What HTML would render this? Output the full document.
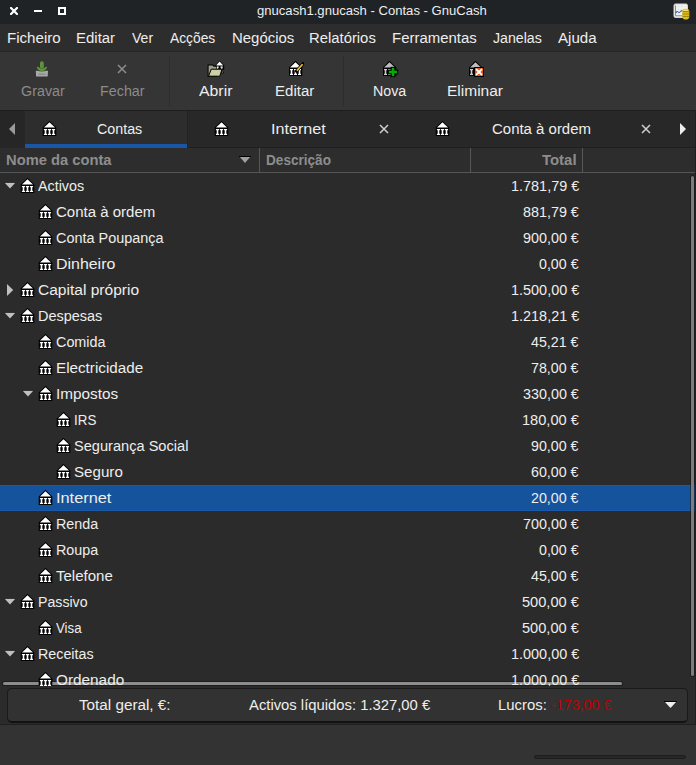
<!DOCTYPE html>
<html><head><meta charset="utf-8"><style>
html,body{margin:0;padding:0;width:696px;height:765px;overflow:hidden;background:#2b2b2b}
.t{position:absolute;white-space:pre;line-height:20px;font-family:"Liberation Sans", sans-serif}
svg{display:block}
</style></head><body>
<div style="position:absolute;left:0px;top:0px;width:696px;height:24px;background:#202326;"></div><svg style="position:absolute;left:10px;top:7px;" width="8" height="8" viewBox="0 0 8 8"><path d="M1 1 L7 7 M7 1 L1 7" stroke="#fff" stroke-width="2.2" stroke-linecap="square"/></svg><div style="position:absolute;left:34px;top:10px;width:8px;height:2px;background:#fff;"></div><svg style="position:absolute;left:58px;top:7px;" width="8" height="8" viewBox="0 0 8 8"><rect x="1" y="1" width="6" height="6" fill="none" stroke="#fff" stroke-width="2"/></svg><div class="t" style="left:256.80px;top:1.38px;font-size:13.33px;color:#eeeeec;font-weight:normal;transform:scaleX(0.9816);transform-origin:0 0;">gnucash1.gnucash - Contas - GnuCash</div><svg style="position:absolute;left:673px;top:3px;" width="17" height="17" viewBox="0 0 17 17"><rect x="1" y="1" width="13.5" height="13.5" rx="1.5" fill="#f2f2f0" stroke="#d6d6d6" stroke-width="1"/><path d="M2.5 3.5 H13.5 M2.5 6.5 H13.5 M5.5 2 V13 M9 2 V13" stroke="#e2e2e2" stroke-width="0.6"/><path d="M2.5 2.5 V12.8 H13" stroke="#8a8a8a" stroke-width="1" fill="none"/><path d="M3 10 Q4 7.5 5.2 9 Q6.3 10.2 7.5 8.5 Q8.4 7.3 9.5 8.2" stroke="#3a67ae" stroke-width="1.1" fill="none"/><rect x="9.3" y="5.8" width="7" height="10.6" rx="2.8" fill="#dcbc1e"/><path d="M9.5 8.6 H16.1 M9.5 11 H16.1 M9.5 13.5 H16.1" stroke="#9c8200" stroke-width="0.9"/><rect x="10.5" y="6.5" width="4.6" height="1.4" rx="0.7" fill="#f4e070"/></svg><div style="position:absolute;left:0px;top:24px;width:696px;height:27px;background:#2d2d2d;"></div><div style="position:absolute;left:0px;top:51px;width:696px;height:1px;background:#262626;"></div><div class="t" style="left:6.77px;top:27.92px;font-size:14.67px;color:#eeeeec;font-weight:normal;transform:scaleX(1.0294);transform-origin:0 0;">Ficheiro</div><div class="t" style="left:75.68px;top:27.92px;font-size:14.67px;color:#eeeeec;font-weight:normal;transform:scaleX(1.0211);transform-origin:0 0;">Editar</div><div class="t" style="left:131.90px;top:27.92px;font-size:14.67px;color:#eeeeec;font-weight:normal;transform:scaleX(0.9591);transform-origin:0 0;">Ver</div><div class="t" style="left:170.30px;top:27.92px;font-size:14.67px;color:#eeeeec;font-weight:normal;transform:scaleX(0.9417);transform-origin:0 0;">Acções</div><div class="t" style="left:231.78px;top:27.92px;font-size:14.67px;color:#eeeeec;font-weight:normal;transform:scaleX(1.0200);transform-origin:0 0;">Negócios</div><div class="t" style="left:309.09px;top:27.92px;font-size:14.67px;color:#eeeeec;font-weight:normal;transform:scaleX(1.0123);transform-origin:0 0;">Relatórios</div><div class="t" style="left:392.28px;top:27.92px;font-size:14.67px;color:#eeeeec;font-weight:normal;transform:scaleX(1.0207);transform-origin:0 0;">Ferramentas</div><div class="t" style="left:493.10px;top:27.92px;font-size:14.67px;color:#eeeeec;font-weight:normal;transform:scaleX(0.9660);transform-origin:0 0;">Janelas</div><div class="t" style="left:557.50px;top:27.92px;font-size:14.67px;color:#eeeeec;font-weight:normal;transform:scaleX(1.0289);transform-origin:0 0;">Ajuda</div><div style="position:absolute;left:0px;top:52px;width:696px;height:58px;background:#353535;"></div><div style="position:absolute;left:169px;top:56px;width:1px;height:50px;background:#2d2d2d;"></div><div style="position:absolute;left:343px;top:56px;width:1px;height:50px;background:#2d2d2d;"></div><div style="position:absolute;left:0px;top:110px;width:696px;height:1px;background:#1e1e1e;"></div><div class="t" style="left:20.50px;top:80.92px;font-size:14.67px;color:#8b8b8b;font-weight:normal;transform:scaleX(0.9778);transform-origin:0 0;">Gravar</div><div class="t" style="left:99.52px;top:80.92px;font-size:14.67px;color:#8b8b8b;font-weight:normal;transform:scaleX(0.9778);transform-origin:0 0;">Fechar</div><div class="t" style="left:199.00px;top:80.92px;font-size:14.67px;color:#eeeeec;font-weight:normal;transform:scaleX(1.0806);transform-origin:0 0;">Abrir</div><div class="t" style="left:275.47px;top:80.92px;font-size:14.67px;color:#eeeeec;font-weight:normal;transform:scaleX(1.0263);transform-origin:0 0;">Editar</div><div class="t" style="left:372.53px;top:80.92px;font-size:14.67px;color:#eeeeec;font-weight:normal;transform:scaleX(0.9706);transform-origin:0 0;">Nova</div><div class="t" style="left:447.44px;top:80.92px;font-size:14.67px;color:#eeeeec;font-weight:normal;transform:scaleX(1.0577);transform-origin:0 0;">Eliminar</div><svg style="position:absolute;left:35px;top:61px;" width="14" height="16" viewBox="0 0 14 16"><rect x="5" y="0.2" width="3.8" height="7.5" rx="1.9" fill="#5a9638"/><path d="M1.8 6.4 Q1.8 5.3 3.1 5.9 L6.9 8.1 L10.7 5.9 Q12 5.3 12 6.4 Q11.2 9.2 6.9 10.4 Q2.6 9.2 1.8 6.4 Z" fill="#5a9638"/><path d="M0.8 9.8 H2.5 Q6.9 11.4 11.3 9.8 H13 L12.7 15.6 H1.1 Z" fill="#a9a9a9"/><rect x="3.2" y="12.6" width="7.4" height="1.3" fill="#8a8a8a"/></svg><svg style="position:absolute;left:117px;top:64px;" width="10" height="10" viewBox="0 0 10 10"><path d="M1 1 L9 9 M9 1 L1 9" stroke="#8d8d8d" stroke-width="1.5"/></svg><svg style="position:absolute;left:207px;top:60px;" width="18" height="18" viewBox="0 0 18 18"><path d="M12.6 0.4 L17.2 5.6 L17.2 9.8 L8.2 9.8 L8.2 5.6 Z" fill="#000"/><path d="M12.6 1.6 L16.3 5.4 L9 5.4 Z" fill="#fff"/><rect x="9.2" y="6.6" width="2.8" height="0.9" fill="#ddd"/><rect x="9.9" y="6.6" width="1.4" height="2.6" fill="#ddd"/><rect x="13.2" y="6.6" width="2.8" height="0.9" fill="#ddd"/><rect x="13.9" y="6.6" width="1.4" height="2.6" fill="#ddd"/><circle cx="15.4" cy="12.2" r="1.3" fill="#000"/><circle cx="15.4" cy="12" r="0.6" fill="#ccc"/><path d="M0.6 4.6 H6 L7 5.8 H10 V17 H0.6 Z" fill="#000"/><path d="M1.6 5.6 H5.5 L6.5 6.8 H9.5 V16 H1.6 Z" fill="#9ea087"/><path d="M4.2 9.2 H15 L12.8 16.2 H1.6 Z" fill="#cdcfa6" stroke="#000" stroke-width="1"/></svg><svg style="position:absolute;left:289px;top:61px;" width="15" height="15" viewBox="0 0 15 15"><path d="M6.5 -0.3 L13.3 6.6 L13.3 15 L-0.3 15 L-0.3 6.6 Z" fill="#000"/><path d="M6.5 1.2 L12 6.6 L1 6.6 Z" fill="#fff"/><rect x="1" y="8" width="3" height="1.2" fill="#fff"/><rect x="1.7" y="8" width="1.6" height="6" fill="#fff"/><rect x="1" y="12.8" width="3" height="1.2" fill="#fff"/><rect x="5" y="8" width="3" height="1.2" fill="#fff"/><rect x="5.7" y="8" width="1.6" height="6" fill="#fff"/><rect x="5" y="12.8" width="3" height="1.2" fill="#fff"/><rect x="9" y="8" width="3" height="1.2" fill="#fff"/><rect x="9.7" y="8" width="1.6" height="6" fill="#fff"/><rect x="9" y="12.8" width="3" height="1.2" fill="#fff"/><path d="M14 2.8 L7.5 10" stroke="#000" stroke-width="3.2" stroke-linecap="round"/><path d="M13.6 3.2 L7.9 9.6" stroke="#f2c230" stroke-width="1.7"/></svg><svg style="position:absolute;left:383px;top:61px;" width="16" height="17" viewBox="0 0 16 17"><path d="M6.5 -0.3 L13.3 6.6 L13.3 15 L-0.3 15 L-0.3 6.6 Z" fill="#000"/><path d="M6.5 1.2 L12 6.6 L1 6.6 Z" fill="#bdbdbd"/><rect x="1" y="8" width="3" height="1.2" fill="#ccc"/><rect x="1.7" y="8" width="1.6" height="6" fill="#ccc"/><rect x="1" y="12.8" width="3" height="1.2" fill="#ccc"/><rect x="5" y="8" width="3" height="1.2" fill="#ccc"/><rect x="5" y="12.8" width="3" height="1.2" fill="#ccc"/><rect x="4.8" y="8.6" width="10.4" height="4.8" fill="#000"/><rect x="7.6" y="5.8" width="4.8" height="10.4" fill="#000"/><rect x="5.8" y="9.7" width="8.4" height="2.6" fill="#00ad00"/><rect x="8.7" y="6.8" width="2.6" height="8.4" fill="#00ad00"/></svg><svg style="position:absolute;left:469px;top:61px;" width="15" height="16" viewBox="0 0 15 16"><path d="M6.5 -0.3 L13.3 6.6 L13.3 15 L-0.3 15 L-0.3 6.6 Z" fill="#000"/><path d="M6.5 1.2 L12 6.6 L1 6.6 Z" fill="#bdbdbd"/><rect x="1" y="8" width="3" height="1.2" fill="#ccc"/><rect x="1.7" y="8" width="1.6" height="6" fill="#ccc"/><rect x="1" y="12.8" width="3" height="1.2" fill="#ccc"/><rect x="5" y="6" width="10" height="10" rx="0.8" fill="#000"/><rect x="6" y="7" width="8" height="8" fill="#e0581c"/><path d="M7.6 8.6 L12.4 13.4 M12.4 8.6 L7.6 13.4" stroke="#fff" stroke-width="2" stroke-linecap="round"/></svg><div style="position:absolute;left:0px;top:111px;width:696px;height:37px;background:#282828;"></div><div style="position:absolute;left:0px;top:111px;width:25px;height:37px;background:#262626;"></div><div style="position:absolute;left:25px;top:111px;width:162px;height:33px;background:#2d2d2d;"></div><div style="position:absolute;left:25px;top:144px;width:162px;height:4px;background:#1a56a6;"></div><div style="position:absolute;left:187px;top:111px;width:1px;height:37px;background:#222;"></div><div style="position:absolute;left:188px;top:147px;width:508px;height:1px;background:#1f1f1f;"></div><svg style="position:absolute;left:9px;top:123px;" width="6" height="12" viewBox="0 0 6 12"><path d="M6 0 L0 6 L6 12 Z" fill="#9a9a9a"/></svg><svg style="position:absolute;left:680px;top:123px;" width="6" height="12" viewBox="0 0 6 12"><path d="M0 0 L6 6 L0 12 Z" fill="#eeeeec"/></svg><svg style="position:absolute;left:43px;top:121px;overflow:visible" width="13" height="15" viewBox="0 0 13 15"><path d="M6.5 -0.3 L13.3 6.6 L13.3 15 L-0.3 15 L-0.3 6.6 Z" fill="#000"/><path d="M6.5 1.2 L12 6.6 L1 6.6 Z" fill="#fff"/><rect x="0.8999999999999999" y="8" width="3.2" height="1.2" fill="#fff"/><rect x="1.7" y="8" width="1.6" height="6" fill="#fff"/><rect x="0.8999999999999999" y="12.8" width="3.2" height="1.2" fill="#fff"/><rect x="4.9" y="8" width="3.2" height="1.2" fill="#fff"/><rect x="5.7" y="8" width="1.6" height="6" fill="#fff"/><rect x="4.9" y="12.8" width="3.2" height="1.2" fill="#fff"/><rect x="8.9" y="8" width="3.2" height="1.2" fill="#fff"/><rect x="9.7" y="8" width="1.6" height="6" fill="#fff"/><rect x="8.9" y="12.8" width="3.2" height="1.2" fill="#fff"/></svg><div class="t" style="left:96.50px;top:118.92px;font-size:14.67px;color:#eeeeec;font-weight:normal;transform:scaleX(0.9739);transform-origin:0 0;">Contas</div><svg style="position:absolute;left:215px;top:121px;overflow:visible" width="13" height="15" viewBox="0 0 13 15"><path d="M6.5 -0.3 L13.3 6.6 L13.3 15 L-0.3 15 L-0.3 6.6 Z" fill="#000"/><path d="M6.5 1.2 L12 6.6 L1 6.6 Z" fill="#fff"/><rect x="0.8999999999999999" y="8" width="3.2" height="1.2" fill="#fff"/><rect x="1.7" y="8" width="1.6" height="6" fill="#fff"/><rect x="0.8999999999999999" y="12.8" width="3.2" height="1.2" fill="#fff"/><rect x="4.9" y="8" width="3.2" height="1.2" fill="#fff"/><rect x="5.7" y="8" width="1.6" height="6" fill="#fff"/><rect x="4.9" y="12.8" width="3.2" height="1.2" fill="#fff"/><rect x="8.9" y="8" width="3.2" height="1.2" fill="#fff"/><rect x="9.7" y="8" width="1.6" height="6" fill="#fff"/><rect x="8.9" y="12.8" width="3.2" height="1.2" fill="#fff"/></svg><div class="t" style="left:271.40px;top:118.92px;font-size:14.67px;color:#eeeeec;font-weight:normal;transform:scaleX(1.1020);transform-origin:0 0;">Internet</div><svg style="position:absolute;left:379px;top:124px;" width="10" height="10" viewBox="0 0 10 10"><path d="M1 1 L9 9 M9 1 L1 9" stroke="#d0d0d0" stroke-width="1.5"/></svg><svg style="position:absolute;left:436px;top:121px;overflow:visible" width="13" height="15" viewBox="0 0 13 15"><path d="M6.5 -0.3 L13.3 6.6 L13.3 15 L-0.3 15 L-0.3 6.6 Z" fill="#000"/><path d="M6.5 1.2 L12 6.6 L1 6.6 Z" fill="#fff"/><rect x="0.8999999999999999" y="8" width="3.2" height="1.2" fill="#fff"/><rect x="1.7" y="8" width="1.6" height="6" fill="#fff"/><rect x="0.8999999999999999" y="12.8" width="3.2" height="1.2" fill="#fff"/><rect x="4.9" y="8" width="3.2" height="1.2" fill="#fff"/><rect x="5.7" y="8" width="1.6" height="6" fill="#fff"/><rect x="4.9" y="12.8" width="3.2" height="1.2" fill="#fff"/><rect x="8.9" y="8" width="3.2" height="1.2" fill="#fff"/><rect x="9.7" y="8" width="1.6" height="6" fill="#fff"/><rect x="8.9" y="12.8" width="3.2" height="1.2" fill="#fff"/></svg><div class="t" style="left:491.50px;top:118.92px;font-size:14.67px;color:#eeeeec;font-weight:normal;transform:scaleX(1.0208);transform-origin:0 0;">Conta à ordem</div><svg style="position:absolute;left:641px;top:124px;" width="10" height="10" viewBox="0 0 10 10"><path d="M1 1 L9 9 M9 1 L1 9" stroke="#d0d0d0" stroke-width="1.5"/></svg><div style="position:absolute;left:0px;top:148px;width:696px;height:24px;background:#2d2d2d;"></div><div style="position:absolute;left:0px;top:172px;width:696px;height:1px;background:#575757;"></div><div style="position:absolute;left:259px;top:148px;width:1px;height:24px;background:#575757;"></div><div style="position:absolute;left:470px;top:148px;width:1px;height:24px;background:#575757;"></div><div style="position:absolute;left:582px;top:148px;width:1px;height:24px;background:#575757;"></div><div class="t" style="left:5.50px;top:149.92px;font-size:14.67px;color:#8d8d8d;font-weight:bold;transform:scaleX(1.0048);transform-origin:0 0;">Nome da conta</div><div class="t" style="left:265.77px;top:149.92px;font-size:14.67px;color:#8d8d8d;font-weight:bold;transform:scaleX(0.9275);transform-origin:0 0;">Descrição</div><div class="t" style="left:542.40px;top:149.92px;font-size:14.67px;color:#8d8d8d;font-weight:bold;transform:scaleX(1.0182);transform-origin:0 0;">Total</div><svg style="position:absolute;left:239px;top:156px;" width="12" height="7" viewBox="0 0 12 7"><path d="M0 0 H12 L6 7 Z" fill="#a0a0a0"/><rect x="0" y="0" width="12" height="1" fill="#000"/></svg><div style="position:absolute;left:0px;top:173px;width:696px;height:513px;background:#2b2b2b;"></div><div style="position:absolute;left:0;top:173px;width:696px;height:513px;overflow:hidden"><div style="position:absolute;left:2px;top:508px;width:621px;height:5px;background:rgba(20,20,20,0.6);border-radius:3px"></div><div style="position:absolute;left:3px;top:509px;width:619px;height:3px;background:#8c8c8c;border-radius:2px"></div><svg style="position:absolute;left:4px;top:9px;" width="12" height="7" viewBox="0 0 12 7"><path d="M0 0 H12 L6 6.5 Z" fill="#c0c0c0"/><rect x="0" y="0" width="12" height="0.8" fill="#111"/></svg><svg style="position:absolute;left:21px;top:5px;overflow:visible" width="13" height="15" viewBox="0 0 13 15"><path d="M6.5 -0.3 L13.3 6.6 L13.3 15 L-0.3 15 L-0.3 6.6 Z" fill="#000"/><path d="M6.5 1.2 L12 6.6 L1 6.6 Z" fill="#fff"/><rect x="0.8999999999999999" y="8" width="3.2" height="1.2" fill="#fff"/><rect x="1.7" y="8" width="1.6" height="6" fill="#fff"/><rect x="0.8999999999999999" y="12.8" width="3.2" height="1.2" fill="#fff"/><rect x="4.9" y="8" width="3.2" height="1.2" fill="#fff"/><rect x="5.7" y="8" width="1.6" height="6" fill="#fff"/><rect x="4.9" y="12.8" width="3.2" height="1.2" fill="#fff"/><rect x="8.9" y="8" width="3.2" height="1.2" fill="#fff"/><rect x="9.7" y="8" width="1.6" height="6" fill="#fff"/><rect x="8.9" y="12.8" width="3.2" height="1.2" fill="#fff"/></svg><div class="t" style="left:38.00px;top:2.92px;font-size:14.67px;color:#eeeeec;font-weight:normal;transform:scaleX(0.9766);transform-origin:0 0;">Activos</div><div class="t" style="left:510.91px;top:2.92px;font-size:14.67px;color:#eeeeec;font-weight:normal;transform:scaleX(0.9853);transform-origin:0 0;">1.781,79 €</div><svg style="position:absolute;left:39px;top:31px;overflow:visible" width="13" height="15" viewBox="0 0 13 15"><path d="M6.5 -0.3 L13.3 6.6 L13.3 15 L-0.3 15 L-0.3 6.6 Z" fill="#000"/><path d="M6.5 1.2 L12 6.6 L1 6.6 Z" fill="#fff"/><rect x="0.8999999999999999" y="8" width="3.2" height="1.2" fill="#fff"/><rect x="1.7" y="8" width="1.6" height="6" fill="#fff"/><rect x="0.8999999999999999" y="12.8" width="3.2" height="1.2" fill="#fff"/><rect x="4.9" y="8" width="3.2" height="1.2" fill="#fff"/><rect x="5.7" y="8" width="1.6" height="6" fill="#fff"/><rect x="4.9" y="12.8" width="3.2" height="1.2" fill="#fff"/><rect x="8.9" y="8" width="3.2" height="1.2" fill="#fff"/><rect x="9.7" y="8" width="1.6" height="6" fill="#fff"/><rect x="8.9" y="12.8" width="3.2" height="1.2" fill="#fff"/></svg><div class="t" style="left:56.00px;top:28.92px;font-size:14.67px;color:#eeeeec;font-weight:normal;transform:scaleX(1.0240);transform-origin:0 0;">Conta à ordem</div><div class="t" style="left:523.10px;top:28.92px;font-size:14.67px;color:#eeeeec;font-weight:normal;transform:scaleX(0.9789);transform-origin:0 0;">881,79 €</div><svg style="position:absolute;left:39px;top:57px;overflow:visible" width="13" height="15" viewBox="0 0 13 15"><path d="M6.5 -0.3 L13.3 6.6 L13.3 15 L-0.3 15 L-0.3 6.6 Z" fill="#000"/><path d="M6.5 1.2 L12 6.6 L1 6.6 Z" fill="#fff"/><rect x="0.8999999999999999" y="8" width="3.2" height="1.2" fill="#fff"/><rect x="1.7" y="8" width="1.6" height="6" fill="#fff"/><rect x="0.8999999999999999" y="12.8" width="3.2" height="1.2" fill="#fff"/><rect x="4.9" y="8" width="3.2" height="1.2" fill="#fff"/><rect x="5.7" y="8" width="1.6" height="6" fill="#fff"/><rect x="4.9" y="12.8" width="3.2" height="1.2" fill="#fff"/><rect x="8.9" y="8" width="3.2" height="1.2" fill="#fff"/><rect x="9.7" y="8" width="1.6" height="6" fill="#fff"/><rect x="8.9" y="12.8" width="3.2" height="1.2" fill="#fff"/></svg><div class="t" style="left:56.00px;top:54.92px;font-size:14.67px;color:#eeeeec;font-weight:normal;transform:scaleX(0.9845);transform-origin:0 0;">Conta Poupança</div><div class="t" style="left:523.10px;top:54.92px;font-size:14.67px;color:#eeeeec;font-weight:normal;transform:scaleX(0.9789);transform-origin:0 0;">900,00 €</div><svg style="position:absolute;left:39px;top:83px;overflow:visible" width="13" height="15" viewBox="0 0 13 15"><path d="M6.5 -0.3 L13.3 6.6 L13.3 15 L-0.3 15 L-0.3 6.6 Z" fill="#000"/><path d="M6.5 1.2 L12 6.6 L1 6.6 Z" fill="#fff"/><rect x="0.8999999999999999" y="8" width="3.2" height="1.2" fill="#fff"/><rect x="1.7" y="8" width="1.6" height="6" fill="#fff"/><rect x="0.8999999999999999" y="12.8" width="3.2" height="1.2" fill="#fff"/><rect x="4.9" y="8" width="3.2" height="1.2" fill="#fff"/><rect x="5.7" y="8" width="1.6" height="6" fill="#fff"/><rect x="4.9" y="12.8" width="3.2" height="1.2" fill="#fff"/><rect x="8.9" y="8" width="3.2" height="1.2" fill="#fff"/><rect x="9.7" y="8" width="1.6" height="6" fill="#fff"/><rect x="8.9" y="12.8" width="3.2" height="1.2" fill="#fff"/></svg><div class="t" style="left:56.00px;top:80.92px;font-size:14.67px;color:#eeeeec;font-weight:normal;transform:scaleX(1.0868);transform-origin:0 0;">Dinheiro</div><div class="t" style="left:539.10px;top:80.92px;font-size:14.67px;color:#eeeeec;font-weight:normal;transform:scaleX(0.9707);transform-origin:0 0;">0,00 €</div><svg style="position:absolute;left:7px;top:111px;" width="7" height="12" viewBox="0 0 7 12"><path d="M0 0 L6.2 6 L0 12 Z" fill="#c0c0c0"/></svg><svg style="position:absolute;left:21px;top:109px;overflow:visible" width="13" height="15" viewBox="0 0 13 15"><path d="M6.5 -0.3 L13.3 6.6 L13.3 15 L-0.3 15 L-0.3 6.6 Z" fill="#000"/><path d="M6.5 1.2 L12 6.6 L1 6.6 Z" fill="#fff"/><rect x="0.8999999999999999" y="8" width="3.2" height="1.2" fill="#fff"/><rect x="1.7" y="8" width="1.6" height="6" fill="#fff"/><rect x="0.8999999999999999" y="12.8" width="3.2" height="1.2" fill="#fff"/><rect x="4.9" y="8" width="3.2" height="1.2" fill="#fff"/><rect x="5.7" y="8" width="1.6" height="6" fill="#fff"/><rect x="4.9" y="12.8" width="3.2" height="1.2" fill="#fff"/><rect x="8.9" y="8" width="3.2" height="1.2" fill="#fff"/><rect x="9.7" y="8" width="1.6" height="6" fill="#fff"/><rect x="8.9" y="12.8" width="3.2" height="1.2" fill="#fff"/></svg><div class="t" style="left:38.00px;top:106.92px;font-size:14.67px;color:#eeeeec;font-weight:normal;transform:scaleX(1.0600);transform-origin:0 0;">Capital próprio</div><div class="t" style="left:510.91px;top:106.92px;font-size:14.67px;color:#eeeeec;font-weight:normal;transform:scaleX(0.9853);transform-origin:0 0;">1.500,00 €</div><svg style="position:absolute;left:4px;top:139px;" width="12" height="7" viewBox="0 0 12 7"><path d="M0 0 H12 L6 6.5 Z" fill="#c0c0c0"/><rect x="0" y="0" width="12" height="0.8" fill="#111"/></svg><svg style="position:absolute;left:21px;top:135px;overflow:visible" width="13" height="15" viewBox="0 0 13 15"><path d="M6.5 -0.3 L13.3 6.6 L13.3 15 L-0.3 15 L-0.3 6.6 Z" fill="#000"/><path d="M6.5 1.2 L12 6.6 L1 6.6 Z" fill="#fff"/><rect x="0.8999999999999999" y="8" width="3.2" height="1.2" fill="#fff"/><rect x="1.7" y="8" width="1.6" height="6" fill="#fff"/><rect x="0.8999999999999999" y="12.8" width="3.2" height="1.2" fill="#fff"/><rect x="4.9" y="8" width="3.2" height="1.2" fill="#fff"/><rect x="5.7" y="8" width="1.6" height="6" fill="#fff"/><rect x="4.9" y="12.8" width="3.2" height="1.2" fill="#fff"/><rect x="8.9" y="8" width="3.2" height="1.2" fill="#fff"/><rect x="9.7" y="8" width="1.6" height="6" fill="#fff"/><rect x="8.9" y="12.8" width="3.2" height="1.2" fill="#fff"/></svg><div class="t" style="left:38.00px;top:132.92px;font-size:14.67px;color:#eeeeec;font-weight:normal;transform:scaleX(0.9859);transform-origin:0 0;">Despesas</div><div class="t" style="left:510.91px;top:132.92px;font-size:14.67px;color:#eeeeec;font-weight:normal;transform:scaleX(0.9853);transform-origin:0 0;">1.218,21 €</div><svg style="position:absolute;left:39px;top:161px;overflow:visible" width="13" height="15" viewBox="0 0 13 15"><path d="M6.5 -0.3 L13.3 6.6 L13.3 15 L-0.3 15 L-0.3 6.6 Z" fill="#000"/><path d="M6.5 1.2 L12 6.6 L1 6.6 Z" fill="#fff"/><rect x="0.8999999999999999" y="8" width="3.2" height="1.2" fill="#fff"/><rect x="1.7" y="8" width="1.6" height="6" fill="#fff"/><rect x="0.8999999999999999" y="12.8" width="3.2" height="1.2" fill="#fff"/><rect x="4.9" y="8" width="3.2" height="1.2" fill="#fff"/><rect x="5.7" y="8" width="1.6" height="6" fill="#fff"/><rect x="4.9" y="12.8" width="3.2" height="1.2" fill="#fff"/><rect x="8.9" y="8" width="3.2" height="1.2" fill="#fff"/><rect x="9.7" y="8" width="1.6" height="6" fill="#fff"/><rect x="8.9" y="12.8" width="3.2" height="1.2" fill="#fff"/></svg><div class="t" style="left:56.00px;top:158.92px;font-size:14.67px;color:#eeeeec;font-weight:normal;transform:scaleX(0.9804);transform-origin:0 0;">Comida</div><div class="t" style="left:531.30px;top:158.92px;font-size:14.67px;color:#eeeeec;font-weight:normal;transform:scaleX(0.9714);transform-origin:0 0;">45,21 €</div><svg style="position:absolute;left:39px;top:187px;overflow:visible" width="13" height="15" viewBox="0 0 13 15"><path d="M6.5 -0.3 L13.3 6.6 L13.3 15 L-0.3 15 L-0.3 6.6 Z" fill="#000"/><path d="M6.5 1.2 L12 6.6 L1 6.6 Z" fill="#fff"/><rect x="0.8999999999999999" y="8" width="3.2" height="1.2" fill="#fff"/><rect x="1.7" y="8" width="1.6" height="6" fill="#fff"/><rect x="0.8999999999999999" y="12.8" width="3.2" height="1.2" fill="#fff"/><rect x="4.9" y="8" width="3.2" height="1.2" fill="#fff"/><rect x="5.7" y="8" width="1.6" height="6" fill="#fff"/><rect x="4.9" y="12.8" width="3.2" height="1.2" fill="#fff"/><rect x="8.9" y="8" width="3.2" height="1.2" fill="#fff"/><rect x="9.7" y="8" width="1.6" height="6" fill="#fff"/><rect x="8.9" y="12.8" width="3.2" height="1.2" fill="#fff"/></svg><div class="t" style="left:56.00px;top:184.92px;font-size:14.67px;color:#eeeeec;font-weight:normal;transform:scaleX(1.0386);transform-origin:0 0;">Electricidade</div><div class="t" style="left:531.30px;top:184.92px;font-size:14.67px;color:#eeeeec;font-weight:normal;transform:scaleX(0.9714);transform-origin:0 0;">78,00 €</div><svg style="position:absolute;left:22px;top:217px;" width="12" height="7" viewBox="0 0 12 7"><path d="M0 0 H12 L6 6.5 Z" fill="#c0c0c0"/><rect x="0" y="0" width="12" height="0.8" fill="#111"/></svg><svg style="position:absolute;left:39px;top:213px;overflow:visible" width="13" height="15" viewBox="0 0 13 15"><path d="M6.5 -0.3 L13.3 6.6 L13.3 15 L-0.3 15 L-0.3 6.6 Z" fill="#000"/><path d="M6.5 1.2 L12 6.6 L1 6.6 Z" fill="#fff"/><rect x="0.8999999999999999" y="8" width="3.2" height="1.2" fill="#fff"/><rect x="1.7" y="8" width="1.6" height="6" fill="#fff"/><rect x="0.8999999999999999" y="12.8" width="3.2" height="1.2" fill="#fff"/><rect x="4.9" y="8" width="3.2" height="1.2" fill="#fff"/><rect x="5.7" y="8" width="1.6" height="6" fill="#fff"/><rect x="4.9" y="12.8" width="3.2" height="1.2" fill="#fff"/><rect x="8.9" y="8" width="3.2" height="1.2" fill="#fff"/><rect x="9.7" y="8" width="1.6" height="6" fill="#fff"/><rect x="8.9" y="12.8" width="3.2" height="1.2" fill="#fff"/></svg><div class="t" style="left:56.00px;top:210.92px;font-size:14.67px;color:#eeeeec;font-weight:normal;transform:scaleX(1.0448);transform-origin:0 0;">Impostos</div><div class="t" style="left:523.10px;top:210.92px;font-size:14.67px;color:#eeeeec;font-weight:normal;transform:scaleX(0.9789);transform-origin:0 0;">330,00 €</div><svg style="position:absolute;left:57px;top:239px;overflow:visible" width="13" height="15" viewBox="0 0 13 15"><path d="M6.5 -0.3 L13.3 6.6 L13.3 15 L-0.3 15 L-0.3 6.6 Z" fill="#000"/><path d="M6.5 1.2 L12 6.6 L1 6.6 Z" fill="#fff"/><rect x="0.8999999999999999" y="8" width="3.2" height="1.2" fill="#fff"/><rect x="1.7" y="8" width="1.6" height="6" fill="#fff"/><rect x="0.8999999999999999" y="12.8" width="3.2" height="1.2" fill="#fff"/><rect x="4.9" y="8" width="3.2" height="1.2" fill="#fff"/><rect x="5.7" y="8" width="1.6" height="6" fill="#fff"/><rect x="4.9" y="12.8" width="3.2" height="1.2" fill="#fff"/><rect x="8.9" y="8" width="3.2" height="1.2" fill="#fff"/><rect x="9.7" y="8" width="1.6" height="6" fill="#fff"/><rect x="8.9" y="12.8" width="3.2" height="1.2" fill="#fff"/></svg><div class="t" style="left:74.00px;top:236.92px;font-size:14.67px;color:#eeeeec;font-weight:normal;transform:scaleX(0.9130);transform-origin:0 0;">IRS</div><div class="t" style="left:522.10px;top:236.92px;font-size:14.67px;color:#eeeeec;font-weight:normal;transform:scaleX(0.9964);transform-origin:0 0;">180,00 €</div><svg style="position:absolute;left:57px;top:265px;overflow:visible" width="13" height="15" viewBox="0 0 13 15"><path d="M6.5 -0.3 L13.3 6.6 L13.3 15 L-0.3 15 L-0.3 6.6 Z" fill="#000"/><path d="M6.5 1.2 L12 6.6 L1 6.6 Z" fill="#fff"/><rect x="0.8999999999999999" y="8" width="3.2" height="1.2" fill="#fff"/><rect x="1.7" y="8" width="1.6" height="6" fill="#fff"/><rect x="0.8999999999999999" y="12.8" width="3.2" height="1.2" fill="#fff"/><rect x="4.9" y="8" width="3.2" height="1.2" fill="#fff"/><rect x="5.7" y="8" width="1.6" height="6" fill="#fff"/><rect x="4.9" y="12.8" width="3.2" height="1.2" fill="#fff"/><rect x="8.9" y="8" width="3.2" height="1.2" fill="#fff"/><rect x="9.7" y="8" width="1.6" height="6" fill="#fff"/><rect x="8.9" y="12.8" width="3.2" height="1.2" fill="#fff"/></svg><div class="t" style="left:74.00px;top:262.92px;font-size:14.67px;color:#eeeeec;font-weight:normal;transform:scaleX(0.9956);transform-origin:0 0;">Segurança Social</div><div class="t" style="left:531.30px;top:262.92px;font-size:14.67px;color:#eeeeec;font-weight:normal;transform:scaleX(0.9714);transform-origin:0 0;">90,00 €</div><svg style="position:absolute;left:57px;top:291px;overflow:visible" width="13" height="15" viewBox="0 0 13 15"><path d="M6.5 -0.3 L13.3 6.6 L13.3 15 L-0.3 15 L-0.3 6.6 Z" fill="#000"/><path d="M6.5 1.2 L12 6.6 L1 6.6 Z" fill="#fff"/><rect x="0.8999999999999999" y="8" width="3.2" height="1.2" fill="#fff"/><rect x="1.7" y="8" width="1.6" height="6" fill="#fff"/><rect x="0.8999999999999999" y="12.8" width="3.2" height="1.2" fill="#fff"/><rect x="4.9" y="8" width="3.2" height="1.2" fill="#fff"/><rect x="5.7" y="8" width="1.6" height="6" fill="#fff"/><rect x="4.9" y="12.8" width="3.2" height="1.2" fill="#fff"/><rect x="8.9" y="8" width="3.2" height="1.2" fill="#fff"/><rect x="9.7" y="8" width="1.6" height="6" fill="#fff"/><rect x="8.9" y="12.8" width="3.2" height="1.2" fill="#fff"/></svg><div class="t" style="left:74.00px;top:288.92px;font-size:14.67px;color:#eeeeec;font-weight:normal;transform:scaleX(1.0326);transform-origin:0 0;">Seguro</div><div class="t" style="left:531.30px;top:288.92px;font-size:14.67px;color:#eeeeec;font-weight:normal;transform:scaleX(0.9714);transform-origin:0 0;">60,00 €</div><div style="position:absolute;left:0px;top:312px;width:696px;height:26px;background:#16539d;"></div><div style="position:absolute;left:0px;top:312px;width:696px;height:1px;background:#1a58a9;"></div><div style="position:absolute;left:0px;top:337px;width:696px;height:1px;background:#1a58a9;"></div><svg style="position:absolute;left:39px;top:317px;overflow:visible" width="13" height="15" viewBox="0 0 13 15"><path d="M6.5 -0.3 L13.3 6.6 L13.3 15 L-0.3 15 L-0.3 6.6 Z" fill="#000"/><path d="M6.5 1.2 L12 6.6 L1 6.6 Z" fill="#fff"/><rect x="0.8999999999999999" y="8" width="3.2" height="1.2" fill="#fff"/><rect x="1.7" y="8" width="1.6" height="6" fill="#fff"/><rect x="0.8999999999999999" y="12.8" width="3.2" height="1.2" fill="#fff"/><rect x="4.9" y="8" width="3.2" height="1.2" fill="#fff"/><rect x="5.7" y="8" width="1.6" height="6" fill="#fff"/><rect x="4.9" y="12.8" width="3.2" height="1.2" fill="#fff"/><rect x="8.9" y="8" width="3.2" height="1.2" fill="#fff"/><rect x="9.7" y="8" width="1.6" height="6" fill="#fff"/><rect x="8.9" y="12.8" width="3.2" height="1.2" fill="#fff"/></svg><div class="t" style="left:56.00px;top:314.92px;font-size:14.67px;color:#eeeeec;font-weight:normal;transform:scaleX(1.1143);transform-origin:0 0;">Internet</div><div class="t" style="left:531.30px;top:314.92px;font-size:14.67px;color:#eeeeec;font-weight:normal;transform:scaleX(0.9714);transform-origin:0 0;">20,00 €</div><svg style="position:absolute;left:39px;top:343px;overflow:visible" width="13" height="15" viewBox="0 0 13 15"><path d="M6.5 -0.3 L13.3 6.6 L13.3 15 L-0.3 15 L-0.3 6.6 Z" fill="#000"/><path d="M6.5 1.2 L12 6.6 L1 6.6 Z" fill="#fff"/><rect x="0.8999999999999999" y="8" width="3.2" height="1.2" fill="#fff"/><rect x="1.7" y="8" width="1.6" height="6" fill="#fff"/><rect x="0.8999999999999999" y="12.8" width="3.2" height="1.2" fill="#fff"/><rect x="4.9" y="8" width="3.2" height="1.2" fill="#fff"/><rect x="5.7" y="8" width="1.6" height="6" fill="#fff"/><rect x="4.9" y="12.8" width="3.2" height="1.2" fill="#fff"/><rect x="8.9" y="8" width="3.2" height="1.2" fill="#fff"/><rect x="9.7" y="8" width="1.6" height="6" fill="#fff"/><rect x="8.9" y="12.8" width="3.2" height="1.2" fill="#fff"/></svg><div class="t" style="left:56.00px;top:340.92px;font-size:14.67px;color:#eeeeec;font-weight:normal;transform:scaleX(0.9767);transform-origin:0 0;">Renda</div><div class="t" style="left:523.10px;top:340.92px;font-size:14.67px;color:#eeeeec;font-weight:normal;transform:scaleX(0.9789);transform-origin:0 0;">700,00 €</div><svg style="position:absolute;left:39px;top:369px;overflow:visible" width="13" height="15" viewBox="0 0 13 15"><path d="M6.5 -0.3 L13.3 6.6 L13.3 15 L-0.3 15 L-0.3 6.6 Z" fill="#000"/><path d="M6.5 1.2 L12 6.6 L1 6.6 Z" fill="#fff"/><rect x="0.8999999999999999" y="8" width="3.2" height="1.2" fill="#fff"/><rect x="1.7" y="8" width="1.6" height="6" fill="#fff"/><rect x="0.8999999999999999" y="12.8" width="3.2" height="1.2" fill="#fff"/><rect x="4.9" y="8" width="3.2" height="1.2" fill="#fff"/><rect x="5.7" y="8" width="1.6" height="6" fill="#fff"/><rect x="4.9" y="12.8" width="3.2" height="1.2" fill="#fff"/><rect x="8.9" y="8" width="3.2" height="1.2" fill="#fff"/><rect x="9.7" y="8" width="1.6" height="6" fill="#fff"/><rect x="8.9" y="12.8" width="3.2" height="1.2" fill="#fff"/></svg><div class="t" style="left:56.00px;top:366.92px;font-size:14.67px;color:#eeeeec;font-weight:normal;transform:scaleX(0.9767);transform-origin:0 0;">Roupa</div><div class="t" style="left:539.10px;top:366.92px;font-size:14.67px;color:#eeeeec;font-weight:normal;transform:scaleX(0.9707);transform-origin:0 0;">0,00 €</div><svg style="position:absolute;left:39px;top:395px;overflow:visible" width="13" height="15" viewBox="0 0 13 15"><path d="M6.5 -0.3 L13.3 6.6 L13.3 15 L-0.3 15 L-0.3 6.6 Z" fill="#000"/><path d="M6.5 1.2 L12 6.6 L1 6.6 Z" fill="#fff"/><rect x="0.8999999999999999" y="8" width="3.2" height="1.2" fill="#fff"/><rect x="1.7" y="8" width="1.6" height="6" fill="#fff"/><rect x="0.8999999999999999" y="12.8" width="3.2" height="1.2" fill="#fff"/><rect x="4.9" y="8" width="3.2" height="1.2" fill="#fff"/><rect x="5.7" y="8" width="1.6" height="6" fill="#fff"/><rect x="4.9" y="12.8" width="3.2" height="1.2" fill="#fff"/><rect x="8.9" y="8" width="3.2" height="1.2" fill="#fff"/><rect x="9.7" y="8" width="1.6" height="6" fill="#fff"/><rect x="8.9" y="12.8" width="3.2" height="1.2" fill="#fff"/></svg><div class="t" style="left:56.00px;top:392.92px;font-size:14.67px;color:#eeeeec;font-weight:normal;transform:scaleX(1.0255);transform-origin:0 0;">Telefone</div><div class="t" style="left:531.30px;top:392.92px;font-size:14.67px;color:#eeeeec;font-weight:normal;transform:scaleX(0.9714);transform-origin:0 0;">45,00 €</div><svg style="position:absolute;left:4px;top:425px;" width="12" height="7" viewBox="0 0 12 7"><path d="M0 0 H12 L6 6.5 Z" fill="#c0c0c0"/><rect x="0" y="0" width="12" height="0.8" fill="#111"/></svg><svg style="position:absolute;left:21px;top:421px;overflow:visible" width="13" height="15" viewBox="0 0 13 15"><path d="M6.5 -0.3 L13.3 6.6 L13.3 15 L-0.3 15 L-0.3 6.6 Z" fill="#000"/><path d="M6.5 1.2 L12 6.6 L1 6.6 Z" fill="#fff"/><rect x="0.8999999999999999" y="8" width="3.2" height="1.2" fill="#fff"/><rect x="1.7" y="8" width="1.6" height="6" fill="#fff"/><rect x="0.8999999999999999" y="12.8" width="3.2" height="1.2" fill="#fff"/><rect x="4.9" y="8" width="3.2" height="1.2" fill="#fff"/><rect x="5.7" y="8" width="1.6" height="6" fill="#fff"/><rect x="4.9" y="12.8" width="3.2" height="1.2" fill="#fff"/><rect x="8.9" y="8" width="3.2" height="1.2" fill="#fff"/><rect x="9.7" y="8" width="1.6" height="6" fill="#fff"/><rect x="8.9" y="12.8" width="3.2" height="1.2" fill="#fff"/></svg><div class="t" style="left:38.00px;top:418.92px;font-size:14.67px;color:#eeeeec;font-weight:normal;transform:scaleX(0.9660);transform-origin:0 0;">Passivo</div><div class="t" style="left:522.10px;top:418.92px;font-size:14.67px;color:#eeeeec;font-weight:normal;transform:scaleX(0.9964);transform-origin:0 0;">500,00 €</div><svg style="position:absolute;left:39px;top:447px;overflow:visible" width="13" height="15" viewBox="0 0 13 15"><path d="M6.5 -0.3 L13.3 6.6 L13.3 15 L-0.3 15 L-0.3 6.6 Z" fill="#000"/><path d="M6.5 1.2 L12 6.6 L1 6.6 Z" fill="#fff"/><rect x="0.8999999999999999" y="8" width="3.2" height="1.2" fill="#fff"/><rect x="1.7" y="8" width="1.6" height="6" fill="#fff"/><rect x="0.8999999999999999" y="12.8" width="3.2" height="1.2" fill="#fff"/><rect x="4.9" y="8" width="3.2" height="1.2" fill="#fff"/><rect x="5.7" y="8" width="1.6" height="6" fill="#fff"/><rect x="4.9" y="12.8" width="3.2" height="1.2" fill="#fff"/><rect x="8.9" y="8" width="3.2" height="1.2" fill="#fff"/><rect x="9.7" y="8" width="1.6" height="6" fill="#fff"/><rect x="8.9" y="12.8" width="3.2" height="1.2" fill="#fff"/></svg><div class="t" style="left:56.00px;top:444.92px;font-size:14.67px;color:#eeeeec;font-weight:normal;transform:scaleX(0.9034);transform-origin:0 0;">Visa</div><div class="t" style="left:522.10px;top:444.92px;font-size:14.67px;color:#eeeeec;font-weight:normal;transform:scaleX(0.9964);transform-origin:0 0;">500,00 €</div><svg style="position:absolute;left:4px;top:477px;" width="12" height="7" viewBox="0 0 12 7"><path d="M0 0 H12 L6 6.5 Z" fill="#c0c0c0"/><rect x="0" y="0" width="12" height="0.8" fill="#111"/></svg><svg style="position:absolute;left:21px;top:473px;overflow:visible" width="13" height="15" viewBox="0 0 13 15"><path d="M6.5 -0.3 L13.3 6.6 L13.3 15 L-0.3 15 L-0.3 6.6 Z" fill="#000"/><path d="M6.5 1.2 L12 6.6 L1 6.6 Z" fill="#fff"/><rect x="0.8999999999999999" y="8" width="3.2" height="1.2" fill="#fff"/><rect x="1.7" y="8" width="1.6" height="6" fill="#fff"/><rect x="0.8999999999999999" y="12.8" width="3.2" height="1.2" fill="#fff"/><rect x="4.9" y="8" width="3.2" height="1.2" fill="#fff"/><rect x="5.7" y="8" width="1.6" height="6" fill="#fff"/><rect x="4.9" y="12.8" width="3.2" height="1.2" fill="#fff"/><rect x="8.9" y="8" width="3.2" height="1.2" fill="#fff"/><rect x="9.7" y="8" width="1.6" height="6" fill="#fff"/><rect x="8.9" y="12.8" width="3.2" height="1.2" fill="#fff"/></svg><div class="t" style="left:38.00px;top:470.92px;font-size:14.67px;color:#eeeeec;font-weight:normal;transform:scaleX(0.9750);transform-origin:0 0;">Receitas</div><div class="t" style="left:510.91px;top:470.92px;font-size:14.67px;color:#eeeeec;font-weight:normal;transform:scaleX(0.9853);transform-origin:0 0;">1.000,00 €</div><svg style="position:absolute;left:39px;top:499px;overflow:visible" width="13" height="15" viewBox="0 0 13 15"><path d="M6.5 -0.3 L13.3 6.6 L13.3 15 L-0.3 15 L-0.3 6.6 Z" fill="#000"/><path d="M6.5 1.2 L12 6.6 L1 6.6 Z" fill="#fff"/><rect x="0.8999999999999999" y="8" width="3.2" height="1.2" fill="#fff"/><rect x="1.7" y="8" width="1.6" height="6" fill="#fff"/><rect x="0.8999999999999999" y="12.8" width="3.2" height="1.2" fill="#fff"/><rect x="4.9" y="8" width="3.2" height="1.2" fill="#fff"/><rect x="5.7" y="8" width="1.6" height="6" fill="#fff"/><rect x="4.9" y="12.8" width="3.2" height="1.2" fill="#fff"/><rect x="8.9" y="8" width="3.2" height="1.2" fill="#fff"/><rect x="9.7" y="8" width="1.6" height="6" fill="#fff"/><rect x="8.9" y="12.8" width="3.2" height="1.2" fill="#fff"/></svg><div class="t" style="left:56.00px;top:496.92px;font-size:14.67px;color:#eeeeec;font-weight:normal;transform:scaleX(1.0462);transform-origin:0 0;">Ordenado</div><div class="t" style="left:510.91px;top:496.92px;font-size:14.67px;color:#eeeeec;font-weight:normal;transform:scaleX(0.9853);transform-origin:0 0;">1.000,00 €</div></div><div style="position:absolute;left:690px;top:175px;width:5px;height:502px;background:rgba(20,20,20,0.55);border-radius:3px"></div><div style="position:absolute;left:691px;top:176px;width:3px;height:500px;background:#7c7c7c;border-radius:2px"></div><div style="position:absolute;left:0px;top:686px;width:696px;height:39px;background:#2b2b2b;"></div><div style="position:absolute;left:7px;top:688px;width:679px;height:32px;background:#323232;border:1px solid #1a1a1a;border-bottom:2px solid #121212;border-radius:5px"></div><div class="t" style="left:79.40px;top:694.92px;font-size:14.67px;color:#eeeeec;font-weight:normal;transform:scaleX(1.0402);transform-origin:0 0;">Total geral, €:</div><div class="t" style="left:249.10px;top:694.92px;font-size:14.67px;color:#eeeeec;font-weight:normal;transform:scaleX(1.0106);transform-origin:0 0;">Activos líquidos: 1.327,00 €</div><div class="t" style="left:497.58px;top:694.92px;font-size:14.67px;color:#eeeeec;font-weight:normal;transform:scaleX(1.0152);transform-origin:0 0;">Lucros:</div><div class="t" style="left:550.50px;top:694.92px;font-size:14.67px;color:#c00000;font-weight:normal;transform:scaleX(0.9758);transform-origin:0 0;">-173,00 €</div><svg style="position:absolute;left:664px;top:701px;" width="13" height="7" viewBox="0 0 13 7"><path d="M0 0 H13 L6.5 7 Z" fill="#eeeeec"/><rect x="0" y="0" width="13" height="1" fill="#000"/></svg><div style="position:absolute;left:695px;top:110px;width:1px;height:615px;background:#1f1f1f;"></div><div style="position:absolute;left:0px;top:724px;width:696px;height:1px;background:#1f1f1f;"></div><div style="position:absolute;left:0px;top:725px;width:696px;height:40px;background:#333333;"></div><div style="position:absolute;left:534px;top:755px;width:152px;height:4px;background:#272727;border-radius:3px;box-sizing:border-box;border:1px solid #1e1e1e"></div>
</body></html>
